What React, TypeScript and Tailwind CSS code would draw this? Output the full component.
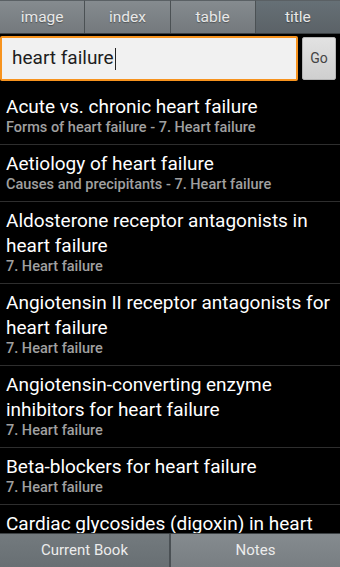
import React from "react";

const items: { t: string; s: string }[] = [
  { t: "Acute vs. chronic heart failure", s: "Forms of heart failure - 7. Heart failure" },
  { t: "Aetiology of heart failure", s: "Causes and precipitants - 7. Heart failure" },
  { t: "Aldosterone receptor antagonists in heart failure", s: "7. Heart failure" },
  { t: "Angiotensin II receptor antagonists for heart failure", s: "7. Heart failure" },
  { t: "Angiotensin-converting enzyme inhibitors for heart failure", s: "7. Heart failure" },
  { t: "Beta-blockers for heart failure", s: "7. Heart failure" },
  { t: "Cardiac glycosides (digoxin) in heart failure", s: "7. Heart failure" },
];

export default function App() {
  const tabs = ["image", "index", "table", "title"];
  return (
    <div
      className="w-[340px] h-[567px] bg-black flex flex-col overflow-hidden"
      style={{ fontFamily: "Roboto, 'Noto Sans', sans-serif" }}
    >
      <div className="h-[34px] flex shrink-0 border-b border-[#3a3f42]">
        {tabs.map((t, i) => (
          <div
            key={t}
            className={`flex-1 flex items-center justify-center pt-[2px] text-[15.5px] text-[#e8e8e8] border-t border-[#5a6064] ${
              i < 3 ? "border-r border-r-[#4b5154]" : ""
            } ${i === 3 ? "bg-gradient-to-b from-[#667076] to-[#5b6267]" : "bg-gradient-to-b from-[#858b8f] to-[#74797d]"}`}
            style={{ textShadow: "0 1px 1px rgba(0,0,0,0.35)" }}
          >
            {t}
          </div>
        ))}
      </div>
      <div className="flex items-start shrink-0 pt-[2px] pb-[7px] pl-0 pr-[4px] gap-[4px]">
        <div className="flex-1 h-[45px] border-2 border-[#f7931e] rounded-[2px] bg-[#f1f1f1] flex items-center pl-[10px]">
          <span className="text-[19px] text-[#1e1e1e]">heart failure</span>
          <span className="w-[1px] h-[22px] bg-[#222] ml-[1px]" />
        </div>
        <div className="w-[34px] h-[43px] mt-[1px] rounded-[2px] border border-[#b4b4b4] bg-gradient-to-b from-[#e2e2e2] to-[#cfcfcf] flex items-center justify-center text-[14px] text-[#444]">
          Go
        </div>
      </div>
      <div className="flex-1 min-h-0 overflow-hidden">
        {items.map((it, i) => (
          <div key={i} className={`pl-[6px] pr-[4px] pt-[6px] pb-[7px] ${i > 0 ? "border-t border-[#2e2e2e]" : ""}`}>
            <div className="text-[19px] leading-[25px] text-white">{it.t}</div>
            <div className="text-[14.5px] leading-[18px] font-medium text-[#a0a0a0]">{it.s}</div>
          </div>
        ))}
      </div>
      <div className="h-[34px] shrink-0 flex border-t border-[#3c4144]">
        <div className="flex-1 flex items-center justify-center text-[15px] text-[#ececec] bg-gradient-to-b from-[#737a7e] to-[#686f73] border-r-2 border-[#4a5054]">
          Current Book
        </div>
        <div className="flex-1 flex items-center justify-center text-[15px] text-[#ececec] bg-gradient-to-b from-[#858b8f] to-[#787e82]">
          Notes
        </div>
      </div>
    </div>
  );
}
